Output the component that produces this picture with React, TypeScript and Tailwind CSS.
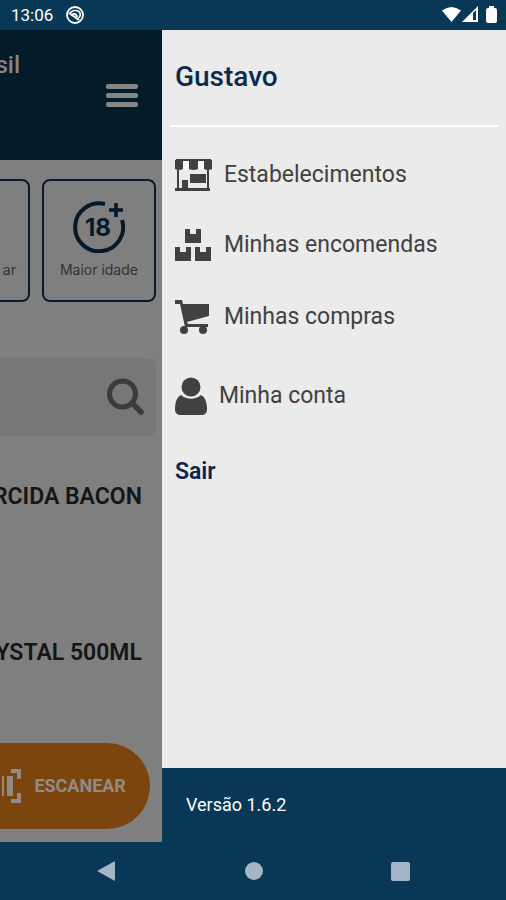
import type { ReactNode } from 'react'

interface MenuItem {
  label: string
  icon: ReactNode
  rowClass: string
}

const StoreIcon = () => (
  <svg width="37" height="33" viewBox="0 0 37 33" fill="#414141">
    <path d="M1 0h35v2H1z" />
    <path d="M0 1h8v9q-4 2-8 0zM14 1h9v9q-4 2-9 0zM29 1h8v9q-4 2-8 0z" />
    <path d="M8 2h6v8q-3 2-6 0zM23 2h6v8q-3 2-6 0z" fill="#fafafa" />
    <path d="M2 11h2v18H2zM32 11h2v18h-2zM15 15h16v9H15zM7 21h6v9H7zM0 29h35v3H0z" />
  </svg>
)

const BoxesIcon = () => (
  <svg width="37" height="33" viewBox="0 0 37 33" fill="#414141">
    <path d="M10 0h5v5h6V0h5v14H10zM0 18h5v5h6v-5h5v14H0zM20 18h5v5h6v-5h5v14H20z" />
  </svg>
)

const CartIcon = () => (
  <svg width="37" height="35" viewBox="0 0 37 35" fill="#414141">
    <path d="M0 0h7l1 4h26v12l-22 6 1 2h20v3H10L5 4H0z" />
    <circle cx="9" cy="30" r="4" />
    <circle cx="28" cy="30" r="4" />
  </svg>
)

const UserIcon = () => (
  <svg width="32" height="39" viewBox="0 0 32 39" fill="#414141">
    <circle cx="16" cy="10" r="9.5" />
    <path d="M6 18c6 5 14 5 20 0 4 2 6 7 6 14 0 4-2 6-6 6H6c-4 0-6-2-6-6 0-7 2-12 6-14z" />
  </svg>
)

const AdultIcon = () => (
  <svg width="52" height="52" viewBox="0 0 52 52" fill="none" stroke="#04192a">
    <path d="M32 3A24 24 0 1 0 49 19" strokeWidth="4" />
    <path d="M43 2v14M36 9h14" strokeWidth="3.5" />
    <text
      x="25"
      y="35"
      textAnchor="middle"
      fontFamily="Inter, sans-serif"
      fontSize="24"
      fontWeight="700"
      fill="#04192a"
      stroke="none"
    >
      18
    </text>
  </svg>
)

const menuItems: MenuItem[] = [
  { label: 'Estabelecimentos', icon: <StoreIcon />, rowClass: 'h-8' },
  { label: 'Minhas encomendas', icon: <BoxesIcon />, rowClass: 'h-8' },
  { label: 'Minhas compras', icon: <CartIcon />, rowClass: 'h-9' },
  { label: 'Minha conta', icon: <UserIcon />, rowClass: 'h-[46px]' },
]

const StatusBar = () => (
  <div className="flex h-[30px] items-center justify-between bg-[#083855] pl-[11px] pr-2 text-white">
    <div className="flex items-center gap-3">
      <span className="text-[17px] leading-5">13:06</span>
      <svg width="20" height="20" viewBox="0 0 20 20" fill="none" stroke="#fff">
        <circle cx="10" cy="10" r="8" strokeWidth="1.8" />
        <path d="M5 9c1-4 8-5 10-1 1 3-1 5-2 5" strokeWidth="1.6" />
        <path d="M4 8l10 7M7 10c1-2 5-1 5 2" strokeWidth="2" />
      </svg>
    </div>
    <svg width="56" height="18" viewBox="0 0 56 18" fill="#fff">
      <path d="M0 4.500Q9.500-2.500 19 4.500L9.500 16z" />
      <path d="M36 0v16H20zM34 4v10h-3V7z" fillRule="evenodd" />
      <rect x="44" y="2" width="11" height="15" rx="2" />
      <rect x="47" y="0" width="5" height="3" />
    </svg>
  </div>
)

const StorePage = () => (
  <section className="flex w-[32%] flex-col overflow-hidden bg-[#7f7f7f]">
    <header className="flex h-[130px] flex-col bg-[#041c29] pt-[21px] text-[#858585]">
      <p className="flex w-5 justify-end self-start text-2xl leading-7 font-medium">sil</p>
      <button aria-label="Menu" className="mr-6 flex w-8 flex-col gap-1 self-end pt-[5px]">
        <span className="h-[5px] w-full rounded-xs bg-[#858585]" />
        <span className="h-[5px] w-full rounded-xs bg-[#858585]" />
        <span className="h-[5px] w-full rounded-xs bg-[#858585]" />
      </button>
    </header>

    <div className="mt-[19px] flex justify-end gap-3 pr-[6px]">
      <button className="flex h-[123px] w-[114px] shrink-0 items-end justify-end rounded-lg border-2 border-[#091a30] pr-3 pb-5 font-[Inter,sans-serif] text-sm text-[#333]">
        ar
      </button>
      <button className="flex h-[123px] w-[114px] shrink-0 flex-col items-center justify-between rounded-lg border-2 border-[#091a30] pt-5 pb-5 font-[Inter,sans-serif] text-sm text-[#333]">
        <AdultIcon />
        Maior idade
      </button>
    </div>

    <div className="mt-14 mr-[6px] flex h-[78px] items-center rounded-r-lg bg-[#777] pr-3">
      <input aria-label="Buscar" type="search" className="h-full w-full min-w-0 bg-transparent" />
      <svg className="shrink-0" width="37" height="38" viewBox="0 0 37 38" fill="none" stroke="#3b3b3b">
        <circle cx="15.500" cy="16" r="13" strokeWidth="5" />
        <path d="M25 25l9 9" strokeWidth="5.500" strokeLinecap="round" />
      </svg>
    </div>

    <div className="mt-[47px] flex flex-col gap-32 pr-5 text-[23px] leading-7 font-semibold whitespace-nowrap text-[#151515]">
      <p className="flex justify-end">RCIDA BACON</p>
      <p className="flex justify-end">YSTAL 500ML</p>
    </div>

    <button className="mt-auto mr-3 mb-[13px] flex h-[86px] items-center justify-end gap-3 rounded-r-full bg-[#7c450e] pr-6 text-lg font-bold text-[#918b87]">
      <svg className="shrink-0" width="20" height="34" viewBox="0 0 20 34" fill="none" stroke="#918b87">
        <path d="M1 7v20" strokeWidth="2" />
        <path d="M8 7v20" strokeWidth="6" />
        <path d="M9 2h8v8M17 24v8H9" strokeWidth="4" />
      </svg>
      ESCANEAR
    </button>
  </section>
)

const Drawer = () => (
  <aside className="flex flex-1 flex-col bg-[#ebebeb]">
    <h1 className="px-[13px] pt-[31px] text-[28px] leading-8 font-medium text-[#0a2b50]">Gustavo</h1>
    <hr className="mx-2 mt-8 border-t-2 border-white" />
    <nav className="mt-8 flex flex-col gap-[38px] px-[13px]">
      {menuItems.map((item) => (
        <a
          key={item.label}
          href="#"
          className={`flex items-center gap-3 text-[23px] whitespace-nowrap text-[#414141] ${item.rowClass}`}
        >
          {item.icon}
          {item.label}
        </a>
      ))}
      <button className="self-start text-[23px] leading-[30px] font-semibold text-[#0a2350]">Sair</button>
    </nav>
    <footer className="mt-auto flex h-[74px] items-center bg-[#083855] px-6 text-lg text-white">
      Versão 1.6.2
    </footer>
  </aside>
)

const App = () => {
  return (
    <div className="flex min-h-screen flex-col bg-[#083855] font-[Roboto,sans-serif]">
      <StatusBar />
      <main className="flex flex-1">
        <StorePage />
        <Drawer />
      </main>
      <nav className="flex h-[58px] items-center justify-between px-24">
        <button aria-label="Voltar">
          <svg width="20" height="20" viewBox="0 0 20 20" fill="#a4b6c6">
            <path d="M1 10L19 0v20z" />
          </svg>
        </button>
        <button aria-label="Início" className="size-[18px] rounded-full bg-[#a4b6c6]" />
        <button aria-label="Recentes" className="size-[19px] rounded-xs bg-[#a4b6c6]" />
      </nav>
    </div>
  )
}

export default App
